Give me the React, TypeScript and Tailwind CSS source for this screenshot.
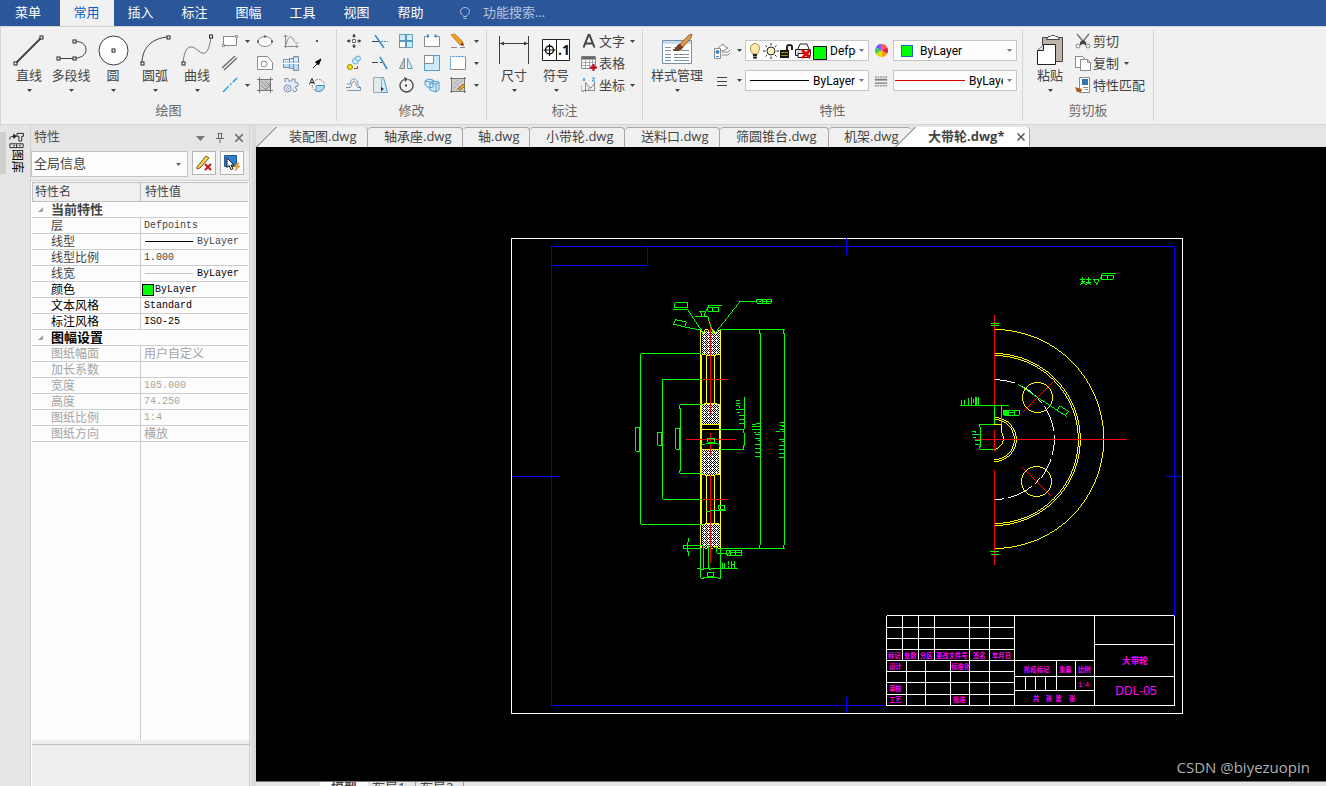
import { useState, type ReactNode } from 'react'
import clsx from 'clsx'

const MENUS = ['常用', '插入', '标注', '图幅', '工具', '视图', '帮助']

const DOC_TABS = [
  { name: '装配图.dwg', width: 'w-[112px] pl-[33px]' },
  { name: '轴承座.dwg', width: 'w-[95px] pl-[16px]' },
  { name: '轴.dwg', width: 'w-[67px] pl-[15px]' },
  { name: '小带轮.dwg', width: 'w-[95px] pl-[16px]' },
  { name: '送料口.dwg', width: 'w-[95px] pl-[16px]' },
  { name: '筛圆锥台.dwg', width: 'w-[109px] pl-[16px]' },
  { name: '机架.dwg', width: 'w-[82px] pl-[15px]' },
]

type Row = { name: string; value?: ReactNode; tone?: string; group?: boolean }

const ROWS: Row[] = [
  { name: '当前特性', group: true, tone: 'text-[#444]' },
  { name: '层', value: 'Defpoints', tone: 'text-[#444]' },
  { name: '线型', value: <LineValue color="bg-black" />, tone: 'text-[#444]' },
  { name: '线型比例', value: '1.000', tone: 'text-[#444]' },
  { name: '线宽', value: <LineValue color="bg-[#c4c4c4]" dark />, tone: 'text-[#444]' },
  { name: '颜色', value: <ColorValue />, tone: 'text-black' },
  { name: '文本风格', value: 'Standard', tone: 'text-black' },
  { name: '标注风格', value: 'ISO-25', tone: 'text-black' },
  { name: '图幅设置', group: true, tone: 'text-black' },
  { name: '图纸幅面', value: '用户自定义' },
  { name: '加长系数', value: '' },
  { name: '宽度', value: '105.000' },
  { name: '高度', value: '74.250' },
  { name: '图纸比例', value: '1:4' },
  { name: '图纸方向', value: '横放' },
]

function LineValue({ color, dark }: { color: string; dark?: boolean }) {
  return (
    <span className={clsx('flex items-center gap-1', dark && 'text-black')}>
      <span className={clsx('h-px w-12 ml-px', color)} />
      ByLayer
    </span>
  )
}

function ColorValue() {
  return (
    <span className="flex items-center gap-px -ml-0.5">
      <span className="size-3 border border-black bg-[#00ff00]" />
      ByLayer
    </span>
  )
}

function Arrow({ className = 'text-[#444]' }: { className?: string }) {
  return (
    <svg viewBox="0 0 5 3" className={clsx('w-[5px] h-[3px] shrink-0', className)} fill="currentColor">
      <path d="M0 0h5L2.5 3z" />
    </svg>
  )
}

function Icon({ children, className = 'size-4' }: { children: ReactNode; className?: string }) {
  return (
    <svg viewBox="0 0 16 16" fill="none" stroke="#8a8a8a" className={clsx('shrink-0', className)}>
      {children}
    </svg>
  )
}

function Group({ label, className, pad, children }: { label: string; className: string; pad: string; children: ReactNode }) {
  return (
    <section className={clsx('flex flex-col justify-between shrink-0 my-[3px] border-r border-[#d4d4d4]', className)}>
      <div className={clsx('flex h-[72px]', pad)}>{children}</div>
      <h2 className="text-center leading-[18px] pb-0.5 text-[#6a6a6a]">{label}</h2>
    </section>
  )
}

function BigButton({ label, className = 'w-[42px]', children }: { label: string; className?: string; children: ReactNode }) {
  return (
    <button className={clsx('flex flex-col items-center pt-1 whitespace-nowrap', className)}>
      <svg viewBox="0 0 32 32" className="size-8 shrink-0" fill="none" stroke="#3c3c46">{children}</svg>
      <span className="leading-[18px]">{label}</span>
      <Arrow className="mt-[5px] text-[#444]" />
    </button>
  )
}

function Cell({ label, children }: { label: string; children: ReactNode }) {
  return (
    <button aria-label={label} className="flex h-[22px] items-center justify-center">
      {children}
    </button>
  )
}

function Knob({ x, y }: { x: number; y: number }) {
  return <rect x={x - 1.5} y={y - 1.5} width="3" height="3" fill="#fff" stroke="#222" />
}

function DrawGroup() {
  return (
    <Group label="绘图" className="w-[336px]" pad="pl-[7px]">
      <BigButton label="直线">
        <path d="M3 29L29 3" strokeWidth="1.8" />
        <Knob x={2.5} y={29.5} /><Knob x={28.5} y={3.5} />
      </BigButton>
      <BigButton label="多段线">
        <path d="M3 24.5H19C26 24 31 21 31 15.500C31 10 26 7 19 7.500" />
        <Knob x={3.5} y={24.5} /><Knob x={19.5} y={24.5} /><Knob x={19.5} y={7.5} />
      </BigButton>
      <BigButton label="圆">
        <circle cx="16.5" cy="16.5" r="14.5" fill="#fff" />
        <Knob x={16.5} y={16.5} />
      </BigButton>
      <BigButton label="圆弧">
        <path d="M3 29C3 14 13 4 29 3" />
        <Knob x={3.5} y={29.5} /><Knob x={29.5} y={3.5} />
      </BigButton>
      <BigButton label="曲线">
        <path d="M2 29C3 18 6 12 11 13S20 21 24 19S29 9 30 3" stroke="#777" />
        <Knob x={2.5} y={29.5} /><Knob x={30} y={2.5} />
      </BigButton>
      <div className="grid grid-cols-[24px_10px_26px_26px_26px] auto-rows-[22px]">
        <Cell label="矩形"><Icon><path d="M1.500 3.500h13v9h-13z" fill="#fff" /><path d="M.5 11.500h2v2h-2zM13.500 2.500h2v2h-2z" fill="#fff" /></Icon></Cell>
        <Cell label="矩形选项"><Arrow /></Cell>
        <Cell label="椭圆"><Icon><ellipse cx="8" cy="8.500" rx="7" ry="5" fill="#fff" /><path d="M7 3.500h2M1 7.500v2M15 7.500v2" stroke="#555" strokeWidth="2" /></Icon></Cell>
        <Cell label="公式曲线"><Icon><path d="M2.500 2v13M1 13.500h14M.5 4l2-2 2 2M13 11.500l2 2-2 2M3 12C5 3 8 2 10 6s3 4 5 4" /></Icon></Cell>
        <Cell label="点"><Icon><path d="M7 7h2v2H7z" fill="#555" stroke="none" /></Icon></Cell>

        <Cell label="平行线"><Icon><path d="M0 13L13 1M2 15L15 3" stroke="#6a6a6a" strokeWidth="1.3" /></Icon></Cell>
        <span />
        <Cell label="局部放大"><Icon><path d="M.500 1.500h10l5 6v7H.500z" fill="#fff" /><circle cx="7" cy="9" r="3" /></Icon></Cell>
        <Cell label="轴"><Icon><path d="M.500 4.500h6v8h-6zM6.500 3.500h4v10h-4zM10.500 1.500h5v14h-5z" fill="#b9dcf6" stroke="#7c8da3" /><path d="M1 5.500h5M7 5.500h3M11 4.500h4M0 8.500h16" stroke="#fff" /></Icon></Cell>
        <Cell label="箭头"><Icon><path d="M4 13l5-5" stroke="#111" /><path d="M12 4L6.500 7l3 3z" fill="#111" stroke="#111" /></Icon></Cell>

        <Cell label="构造线"><Icon><path d="M1 15L15 1" stroke="#2ba3dc" strokeWidth="1.5" strokeDasharray="8 2 2 2" /></Icon></Cell>
        <Cell label="构造线选项"><Arrow /></Cell>
        <Cell label="填充"><Icon><path d="M2 2h12v12H2z" fill="#c4c8c8" stroke="none" /><path d="M2.500 0v16M13.500 0v16M0 2.500h16M0 13.500h16M8 13c3-2 5-4 5-7" stroke="#777" /><path d="M4 4l7 7M4 8l4 4M8 4l4 4" stroke="#999" /></Icon></Cell>
        <Cell label="齿轮"><Icon><path d="M2 5V1.500h3l1 3 3-1V2h3v3l3 1v3l-3 1 2 3-2 2-3-2" fill="#dfe9f7" stroke="#7f8ca3" /><circle cx="4.500" cy="11.500" r="3.500" fill="#dfe9f7" stroke="#7f8ca3" /><circle cx="4.500" cy="11.500" r="1" fill="#fff" stroke="#7f8ca3" /></Icon></Cell>
        <Cell label="块"><Icon><circle cx="9.500" cy="8.500" r="6" fill="#fff" strokeDasharray="3 1" /><path d="M7 8.500h8.500A6 6 0 0 1 7 14z" fill="#aadcf8" stroke="#5a8cb0" /><path d="M.5 7.500L3 1.500 5.500 7.500M1.500 5.500h3" stroke="#222" /></Icon></Cell>
      </div>
    </Group>
  )
}

function ModifyGroup() {
  const blue = '#2f8fd0'
  return (
    <Group label="修改" className="w-[150px]" pad="pl-1">
      <div className="grid grid-cols-[26px_26px_26px_26px_26px_10px] auto-rows-[22px]">
        <Cell label="移动"><Icon><path d="M6.500 6.500h3v3h-3z" fill="#fff" stroke="#666" /><path d="M8 1v4M8 11v4M1 8h4M11 8h4" stroke="#555" /><path d="M8 1l2 2.500H6zM8 15l2-2.500H6zM1 8l2.500-2v4zM15 8l-2.500-2v4z" fill="#333" stroke="none" /></Icon></Cell>
        <Cell label="裁剪"><Icon><path d="M0 8.500h7" stroke="#444" /><path d="M3 2l9 13" stroke={blue} strokeWidth="1.5" /><path d="M9 8.500h7" stroke={blue} strokeDasharray="2 1" /></Icon></Cell>
        <Cell label="阵列"><Icon><path d="M1.500 1.500h13v13h-13z" fill="#ccecfc" stroke="#6aa0c0" /><path d="M1.500 8.500h6v6h-6z" fill="#fff" stroke="none" /><path d="M8 1v14M1 8h14" stroke="#5a98c0" strokeWidth="2" /><path d="M1.500 9v5.500H7" /></Icon></Cell>
        <Cell label="打断"><Icon><path d="M4 3.500H.500v10h15v-10H12" fill="#fff" /><path d="M4 1.500v3M11.500 1.500v3" stroke={blue} strokeWidth="2" /></Icon></Cell>
        <Cell label="删除"><Icon><path d="M1 2l4-1 8 8-3 3z" fill="#f2a127" stroke="#c88430" /><path d="M10 12l3-3 1 4z" fill="#7a3d1c" stroke="none" /><path d="M1 14.500h6M10 14.500h5" /></Icon></Cell>
        <Cell label="删除选项"><Arrow /></Cell>

        <Cell label="复制"><Icon><circle cx="4" cy="12" r="2.500" fill="#ffe600" stroke="#9a8400" /><circle cx="9.500" cy="6" r="3" fill="#d2edfc" stroke="#6aaad8" /><circle cx="12" cy="3.500" r="2.500" fill="#d2edfc" stroke="#6aaad8" /><path d="M8 13.500h3.500V11" stroke="#b33" /></Icon></Cell>
        <Cell label="延伸"><Icon><path d="M0 7.500h6M8 7.500h2" stroke="#444" /><path d="M8 2l7 12" stroke={blue} strokeWidth="1.5" /></Icon></Cell>
        <Cell label="镜像"><Icon><path d="M6.500 3v10.500h-5z" fill="#ccc" /><path d="M9.500 3v10.500h5z" fill="#ccecfc" stroke="#6aa0c0" /></Icon></Cell>
        <Cell label="缩放"><Icon><path d="M.500.500h15v15H.500z" fill="#ccecfc" stroke="#5a98c8" /><path d="M.500.500h9v8h-9z" fill="#fff" /></Icon></Cell>
        <Cell label="分解"><Icon><path d="M.500 1.500h15v13H.500z" fill="#fff" stroke="none" /><path d="M.500 14.500v-13h15" stroke={blue} strokeDasharray="2 1" /><path d="M15.500 2v12.500H1" /></Icon></Cell>
        <Cell label="分解选项"><Arrow /></Cell>

        <Cell label="等距线"><Icon><path d="M0 10.500h4c2 0 1-6 4-6s2 6 4 6h3" /><path d="M1 13.500h13.500q1-4-2-4.500c-1-1 0-7-4.500-7-3 0-3.500 2-3.500 5H1" stroke="#6d9fc5" /></Icon></Cell>
        <Cell label="拉伸"><Icon><path d="M7.500.500h4l4 15h-8" fill="#ccecfc" stroke="#5a98c8" /><path d="M1.500.500h8v15h-8z" fill="#e3eaea" stroke="#a0a8a8" /><path d="M9 10l3 2-3 2z" fill="#333" stroke="none" /></Icon></Cell>
        <Cell label="旋转"><Icon><path d="M6 2.500A6.500 6.500 0 1 0 10.500 2.300" stroke="#444" strokeWidth="1.3" /><path d="M6 0l4 2-3 3z" fill="#444" stroke="none" /><path d="M7 7.500h2v2H7z" fill="#444" stroke="none" /></Icon></Cell>
        <Cell label="三维"><Icon><path d="M1 4l3-2 5 1v7l-4 1-4-3zM6 6l3-2 6 1v8l-3 2-6-2z" fill="#ccecfc" stroke="#5a98c8" /><path d="M6 6l6 1v8M12 7l3-2M1 4l5 1" stroke="#5a98c8" /></Icon></Cell>
        <Cell label="填充编辑"><Icon><path d="M1.500 1.500h13v13h-13z" fill="#cdcdcd" stroke="#777" /><path d="M0 1.500h16M1.500 0v16M0 14.500h16M14.500 0v16" stroke="#777" /><path d="M3 8l5-5M3 12l9-9M6 13l4-4" stroke="#aaa" /><path d="M8 12l5-5 2 2-5 4z" fill="#eba335" stroke="#a06a20" /></Icon></Cell>
        <Cell label="填充编辑选项"><Arrow /></Cell>
      </div>
    </Group>
  )
}

function TextButton({ label, arrow, children }: { label: string; arrow?: boolean; children: ReactNode }) {
  return (
    <button className="flex h-[22px] items-center gap-0.5 whitespace-nowrap">
      {children}
      <span>{label}</span>
      {arrow && <Arrow className="ml-[3px] text-[#444]" />}
    </button>
  )
}

function AnnotateGroup() {
  return (
    <Group label="标注" className="w-[156px]" pad="pl-1.5">
      <BigButton label="尺寸">
        <path d="M1.500 2v28M30.500 2v28M2 9.500h28" />
        <path d="M2 9.500l4-2v4zM30 9.500l-4-2v4z" fill="#3c3c46" stroke="none" />
      </BigButton>
      <BigButton label="符号">
        <path d="M2.500 5.500h27v21h-27zM16.500 5.500v21" fill="#fff" stroke="#222" />
        <circle cx="9.500" cy="16" r="4" stroke="#111" strokeWidth="1.500" />
        <path d="M9.500 10v12M3.500 16h12" stroke="#111" />
        <text x="18" y="21" fontSize="14" fontWeight="bold" fill="#111" stroke="none">.1</text>
      </BigButton>
      <div className="flex flex-col pl-1">
        <TextButton label="文字" arrow>
          <Icon><path d="M2.500 14.500L7.500 2h1l5 12.500M4.500 10.500h7" stroke="#444" strokeWidth="2" /></Icon>
        </TextButton>
        <TextButton label="表格">
          <Icon><path d="M.500 1.500h14v12H.500z" fill="#fff" /><path d="M1 3h13" stroke="#666" strokeWidth="3" /><path d="M.500 7.500h14M.500 10.500h14M4.500 4v9M8.500 4v9M11.500 4v9" stroke="#aaa" /><path d="M12.500 9v7M9 12.500h7" stroke="#c00010" strokeWidth="2" /></Icon>
        </TextButton>
        <TextButton label="坐标" arrow>
          <Icon><path d="M4.500 5v10M2 13.500h12M13.500 5v9M5 6l3 4 2 1 3-4M8 14v-3" /><path d="M2 1l2 3M4 1L2 4M11 1h3l-3 3h3M0 8v5M0 14h3" stroke="#3a9ad8" /></Icon>
        </TextButton>
      </div>
    </Group>
  )
}

function Combo({ label, value, gap = 'gap-1', before }: { label: string; value: string; gap?: string; before: ReactNode }) {
  return (
    <div className={clsx("flex h-[21px] w-[124px] items-center border border-[#c6c6c6] bg-[#fdfdfd] pl-px pr-1 font-['Roboto',sans-serif] text-xs text-black", gap)}>
      {before}
      <select aria-label={label} className="appearance-none min-w-0 flex-1 overflow-hidden bg-transparent leading-4 outline-none">
        <option>{value}</option>
      </select>
      <Arrow className="text-[#777]" />
    </div>
  )
}

function LayerIcons() {
  return (
    <svg viewBox="0 0 80 18" className="w-[80px] h-[18px] shrink-0" fill="none" stroke="#222">
      <path d="M5.500 12C5 10 3.500 9 3.500 6a4.500 4.500 0 0 1 9 0c0 3-1.500 4-2 6z" fill="#ffe9a8" stroke="#b08a40" />
      <path d="M6 13h4M6 15.500h4" strokeWidth="2" />
      <circle cx="24" cy="9" r="4" fill="#fff6c8" />
      <path d="M24 1v2.500M24 14.500V17M16 9h2.500M29.500 9H32M18.500 3.500l1.500 1.500M28 13l1.500 1.500M29.500 3.500L28 5M20 13l-1.500 1.500" />
      <path d="M40 9V5q0-2 2.500-2T45 5v3" strokeWidth="2" />
      <path d="M33 8h9v8h-9z" fill="#1a1a08" stroke="none" />
      <path d="M34 10.500h7M34 13.500h7" stroke="#998b20" />
      <path d="M51 7l2-5h7l2 5" fill="#fff" />
      <path d="M48.500 7.500h15v6h-15z" fill="#ddd" />
      <path d="M51 11.500h10v4H51z" fill="#fff" />
      <path d="M55 8l8 8M63 8l-8 8" stroke="#e00" strokeWidth="2.500" />
      <path d="M66.500 4.500h13v13h-13z" fill="#0f0" stroke="#000" />
    </svg>
  )
}

function PropsGroup() {
  return (
    <Group label="特性" className="w-[380px]" pad="pl-1">
      <BigButton label="样式管理" className="w-[60px]">
        <path d="M1.500 6.500h29v23h-29z" fill="#fff" stroke="#7890aa" />
        <path d="M2 7h28v3H2z" fill="#c8dcf0" stroke="none" />
        <path d="M4 13.500h6M4 16.500h6M4 20.500h6M4 23.500h6M4 26.500h6M13 13.500h5M13 20.500h15M13 23.500h15M13 26.500h15M20 16.500h8" stroke="#8090a8" />
        <path d="M12 16c4 0 3-5 7-6l3 3c-2 4-6 4-10 3z" fill="#7a4520" stroke="#5b3013" />
        <path d="M19 10L28 1l3-1-1 4-8 9z" fill="#e09a50" stroke="#a56427" />
      </BigButton>
      <div className="flex flex-col gap-[9px] pt-2.5 pl-[7px]">
        <div className="flex h-[21px] items-center">
          <button aria-label="图层" className="w-4"><Icon><path d="M5 4l4-3 1 2 4 2-5 3-4-1zM8 9h6l2-2M8 12h6l2-2" fill="#fff" /><path d="M.500 5.500h6v10h-6z" fill="#fff" /><circle cx="3.500" cy="9" r="2" fill="#3a80c0" stroke="none" /><path d="M2 13.500h3" stroke="#3a80c0" /></Icon></button>
          <button aria-label="图层选项" className="flex w-[15px] justify-center pl-1"><Arrow /></button>
          <Combo label="图层" value="Defpoints" gap="gap-[3px]" before={<LayerIcons />} />
          <button aria-label="颜色" className="flex w-6 justify-center">
            <svg viewBox="0 0 16 16" className="size-[15px]">
              <path d="M8 8L8 1A7 7 0 0 1 14 4.500z" fill="#ff5a4a" />
              <path d="M8 8L14 4.500A7 7 0 0 1 14 11.500z" fill="#e02050" />
              <path d="M8 8L14 11.500A7 7 0 0 1 8 15z" fill="#ff9a10" />
              <path d="M8 8V15A7 7 0 0 1 2 11.500z" fill="#d8e000" />
              <path d="M8 8L2 11.500A7 7 0 0 1 2 4.500z" fill="#3ccc5c" />
              <path d="M8 8L2 4.500A7 7 0 0 1 8 1z" fill="#7a50ff" />
            </svg>
          </button>
          <Combo label="颜色" value="ByLayer" gap="gap-[7px]" before={<span className="ml-1.5 size-3 border border-[#1a6fc0] bg-[#00ff00]" />} />
        </div>
        <div className="flex h-[21px] items-center">
          <button aria-label="线宽" className="w-4"><Icon><path d="M3 4.500h10M3 8.500h10M3 12.500h10" stroke="#444" /></Icon></button>
          <button aria-label="线宽选项" className="flex w-[15px] justify-center pl-1"><Arrow /></button>
          <Combo label="线型" value="ByLayer" before={<span className="ml-[3px] h-px w-[59px] shrink-0 bg-black" />} />
          <button aria-label="线型管理" className="flex w-6 justify-center">
            <Icon className="size-[14px]"><path d="M1 3.500h14M1 13.500h14" stroke="#555" strokeDasharray="2 1" /><path d="M1 6.500h14" stroke="#777" strokeWidth="2" /><path d="M1 10.500h14" stroke="#999" strokeWidth="2" /></Icon>
          </button>
          <Combo label="线宽" value="ByLayer" before={<span className="h-px w-[70px] shrink-0 bg-[#d00000]" />} />
        </div>
      </div>
    </Group>
  )
}

function ClipboardGroup() {
  return (
    <Group label="剪切板" className="w-[131px]" pad="pl-1.5">
      <BigButton label="粘贴">
        <path d="M8.500 3.500h20v24h-20z" fill="#c0b4a8" stroke="#444" />
        <path d="M12.500 5.500h13l-2-3h-2l-1-1h-3l-1 1h-2z" fill="#fff" stroke="#444" />
        <path d="M9.500 10.500h12v20h-18v-14z" fill="#fff" stroke="#222" />
        <path d="M9.500 10.500v6h-6" fill="#ddd" stroke="#222" />
      </BigButton>
      <div className="flex flex-col items-start pl-1">
        <TextButton label="剪切">
          <Icon><path d="M2 1l9 11M14 1L5 12" stroke="#777" strokeWidth="1.500" /><circle cx="3" cy="13" r="2" /><circle cx="13" cy="13" r="2" /><path d="M5 9l3-2 3 2v3l-3-1-3 1z" fill="#444" stroke="none" /></Icon>
        </TextButton>
        <TextButton label="复制" arrow>
          <Icon><path d="M.500 1.500h7l3 3v8H.500z" fill="#fff" /><path d="M5.500 4.500h7l3 3v8h-10z" fill="#fff" /><path d="M12.500 4.500v3h3" /></Icon>
        </TextButton>
        <TextButton label="特性匹配">
          <Icon><path d="M4.500.500h10v15h-10z" fill="#fff" /><path d="M7 2h6v6H7z" fill="#3272b0" stroke="none" /><path d="M8 10.500h5M10 12.500h3" /><path d="M0 10l3 1 4 1-1 3H2z" fill="#b05a18" stroke="none" /></Icon>
        </TextButton>
      </div>
    </Group>
  )
}

function PropertyPanel() {
  return (
    <aside className="flex w-[220px] shrink-0 flex-col border-x border-[#d0d0d0] bg-[#eeeeee]">
      <header className="flex h-[26px] items-center bg-[#e5e5e5] pl-[3px] text-[#555]">
        <h2 className="flex-1 pb-1">特性</h2>
        <button aria-label="菜单" className="px-1.5"><svg viewBox="0 0 9 5" className="w-[9px] h-[5px]" fill="#777"><path d="M0 0h9L4.500 5z" /></svg></button>
        <button aria-label="固定" className="px-[5px]"><svg viewBox="0 0 8 10" className="w-2 h-2.5" fill="none" stroke="#666"><path d="M2.500 0v5.500M1.500.500h5M5.500 0v5.500M0 5.500h8M4 6v4" /></svg></button>
        <button aria-label="关闭" className="px-1.5"><svg viewBox="0 0 8 8" className="size-2" stroke="#666" strokeWidth="1.500"><path d="M0 0l8 8M8 0L0 8" /></svg></button>
      </header>
      <div className="flex h-[29px] items-start gap-1">
        <div className="flex h-[26px] flex-1 items-center border border-[#c4c4c4] bg-[#fdfdfd] pl-0.5 pr-1.5">
          <select aria-label="对象" className="appearance-none flex-1 bg-transparent pb-0.5 outline-none text-[#444]">
            <option>全局信息</option>
          </select>
          <Arrow className="text-[#666]" />
        </div>
        <button aria-label="清除" className="flex size-6 items-center justify-center border border-[#b4b4b4] bg-[#fbfbfb]">
          <Icon><path d="M1 12L10 1l3 2L4 13l-3 1z" fill="#f6cf54" stroke="#7a5a18" /><path d="M9 9l6 6M15 9l-6 6" stroke="#c81818" strokeWidth="2" /></Icon>
        </button>
        <button aria-label="快速选择" className="mr-[5px] flex size-6 items-center justify-center border border-[#b4b4b4] bg-[#fbfbfb]">
          <Icon><path d="M.500.500h12v11H.500z" fill="#2f7fd0" stroke="#23568c" /><path d="M3 3l7 7H7l2 4-2 .500-2-4-2 2z" fill="#fff" stroke="#222" /><path d="M13 8l-3 4h3l-2 4 5-5h-3l2-3z" fill="#ffa51e" stroke="#c27010" strokeWidth=".5" /></Icon>
        </button>
      </div>
      <div className="flex flex-1 flex-col border-t border-[#d0d0d0] bg-[#fdfdfd] pt-px pl-px pr-px">
        <table className="w-full table-fixed border-separate border-spacing-0 text-left text-xs leading-[15px]">
          <thead>
            <tr className="text-[#444]">
              <th className="h-5 w-[109px] border border-[#c0c0c0] bg-[#f0f0f0] pl-0.5 leading-[18px] font-normal">特性名</th>
              <th className="border-y border-[#c0c0c0] bg-[#f0f0f0] pl-1 leading-[18px] font-normal">特性值</th>
            </tr>
          </thead>
          <tbody>
            {ROWS.map((row) => (
              <tr key={row.name} className={row.tone ?? 'text-[#a4a4a4]'}>
                {row.group ? (
                  <th colSpan={2} className="h-4 border-b border-[#cccccc] text-[13px]">
                    <span className="flex h-[15px] items-center gap-2 pl-1.5">
                      <svg viewBox="0 0 5 5" className="size-[5px]" fill="#a0a0a0"><path d="M5 0v5H0z" /></svg>
                      {row.name}
                    </span>
                  </th>
                ) : (
                  <>
                    <td className="h-4 border-r border-b border-[#cccccc] pl-[19px]">
                      <div className="h-[15px]">{row.name}</div>
                    </td>
                    <td className="h-4 border-b border-[#cccccc] pl-[3px]">
                      <div className={clsx('h-[15px]', row.value === '用户自定义' || row.value === '横放' ? 'text-xs leading-[15px]' : "font-['Liberation_Mono',monospace] text-[10px] leading-[15px]")}>
                        {row.value}
                      </div>
                    </td>
                  </>
                )}
              </tr>
            ))}
          </tbody>
        </table>
        <div className="w-[109px] flex-1 border-r border-[#cccccc]" />
      </div>
      <div className="h-[46px] border-l border-white pt-1">
        <hr className="border-[#c0c0c0]" />
      </div>
    </aside>
  )
}

// Section of the wheel, units are thirds of a screen pixel
function SectionView() {
  return (
    <g transform="translate(630 290) scale(.3333333)" strokeWidth="3" fill="none">
      <g fill="url(#hatch)" stroke="none">
        <path d="M215 124h54v70h-54zM216 342h52v60h-52zM216 480h52v74h-52zM215 702h54v70h-54z" />
      </g>
      <g stroke="#ffff00">
        <path d="M211.500 120V775M214.500 195V705M271.500 120V775M268.500 342V555" />
        <path d="M229.500 197V340M253.500 197V340M229.500 556V700M253.500 556V700" />
        <path d="M215 193.500h12v3h30v-3h12M216 343.500h6v-3h40v3h6M214 403.500h56M214 418.500h56M214 478.500h56M216 552.500h9v3h30v-3h12M215 703.500h10v-3h40v3h4" />
        <path d="M211 120.500l8 10 6-11h8l6 10 4-10h6l6 11 8-10h8M211 775l7-8 6 8h8l6-8 6 8h6l7-8 8 8h6" />
      </g>
      <g stroke="#ff0000">
        <path d="M241.500 100V372M241.500 430V495M241.500 556V820M168 448.500H318M212 268.500H294M212 628.500H294" />
      </g>
      <g stroke="#00ff00">
        <path d="M214 190.500H31.500V703.500H214M16.500 412h12v72h-12z" />
        <path d="M214 268.500H97.500V628.500H214M82.500 427h13v39h-13z" />
        <path d="M214 343.500H148.500v12h3V541.500h-3v9H214M136.500 415h12v63h-12z" />
        <path d="M271 118.500H465M388.500 118v12h3V766.500h-3v9M460.500 118v12h3V766.500h-3v9M271 775.500H465" />
        <path d="M343.500 321V418M271 418.500H340.500v12h3V466h-3v12.500H271" />
        <path d="M318 331.500h12M318 340.500h12M318 346.500h10v6M318 358.500h25M321 367.500h9M327 376.500h16M327 388.500h16M327 400.500h16" />
        <path d="M366 403.500h12M378 400.500h12M366 409.500h24M366 418.500h25M372 427.500h6M384 427.500h7M375 433.500h16M375 445.500h16M384 451.500h6M375 463.500h16M375 475.500h16M375 487.500h16M375 499.500h16" />
        <path d="M450 397.500h13M450 406.500h13M456 409.500h7M450 418.500h13M438 424.500h12M456 424.500h7M447 448.500h16M456 454.500h7M447 466.500h16M447 478.500h16M447 490.500h16M447 502.500h16" />
        <path d="M133.500 37.500h39v15h-39zM129 58.500h45L222 130" />
        <path d="M138 88l6 3 25 4-5 16-34-9zM130 102l30 8 35 7 20 2" />
        <path d="M208 64.500h18l8-18H276M232.500 52h34v12h-34zM248.500 52v12M212 67l4 11h6l4-12M196 79.500h38l8 24 8 26" />
        <path d="M252 130L328 34.500H380M379.500 28h45v12h-45zM388 36l8-6M396.500 30v10M400 33h22M410 30v8" />
        <path d="M214 472v-9h12l3-3h30l6 3h4v9M232.500 445h21v12h-21z" />
        <path d="M228 663.500h12v-3h48M265.500 646h18v12h-18z" />
        <path d="M160.500 766.500h60M160.500 775.500h51M160.500 766v10M175.500 743v12h-3v30h3v12M220.500 766v70M235.500 766v70M259.500 772v18h30" />
        <path d="M289.500 781h45v15h-45zM292 794l8-10M302.500 782v14M303 788.500h30M316.500 784v10" />
        <path d="M201 835.500h10v3h12v-3h14v3h6v-3H324M277.500 820v15M283.500 820v15M295.500 812v12M295.500 828v7M304.500 812v23M313.500 812v23M307 823h8" />
        <path d="M211.500 775V865.500h9v-3h42v3h9V775M232.500 847h18v13h-18z" />
      </g>
    </g>
  )
}

// Half front elevation, units are thirds of a screen pixel
function FrontView() {
  return (
    <g transform="translate(940 260) scale(.3333333)" strokeWidth="3" fill="none">
      <g stroke="#ffff00">
        <path d="M163 208.500A328.500 328.500 0 0 1 163 865.500" />
        <path d="M163 280.500A257 257 0 0 1 163 796.500M163 286.500A251 251 0 0 1 163 790.500" />
        <circle cx="292.500" cy="412.500" r="45.500" />
        <circle cx="289.500" cy="664.500" r="45.500" />
        <path d="M163 472.500A66 66 0 0 1 163 604.500M163 478.500A60 60 0 0 1 163 598.500" />
        <path d="M163 493.500h21.500v24A33 33 0 0 1 163 568.500" />
      </g>
      <path d="M163 358.500A180 180 0 0 1 163 718.500" stroke="#fff" strokeDasharray="62 12 90 12 80 12" />
      <g stroke="#ff0000">
        <path d="M163.500 165V490M163.500 510V572M163.500 629V915M105 538.500H561M250 455L338 367M247 622L334 709" />
      </g>
      <g stroke="#00ff00">
        <path d="M153 190.500h24M153 196.500h24M150 874.500h27M153 883.500h24" />
        <path d="M60 436.500H207M163.500 436V493M184.500 436V493M64.500 420v15M73.500 420v15M85.500 414v21M94.500 411v24M100.500 416v12M106.500 411v24M109.500 411v24M115.500 411v24" />
        <path d="M163 493.500H118.500v9h3v57h-3v9H163M96 514.500h10v5M96 523.500h24M99 532.500h9M105 541.500h15M105 553.500h15" />
        <path d="M190.500 451h48v15h-48zM205.500 451v15M208 458h14M223.500 451v15" />
        <path d="M192 453h12v12h-12z" fill="#00ff00" stroke="none" />
        <path d="M235 373L292 412L335 440L380 469M352 451l8-14 25 17-9 13" />
        <path d="M421 58h14M428.500 50v22M424 65h12M420 74l8-8 8 8M438 60h15M446.500 50v23M439 67h14M439 74l7-8 7 8" />
        <path d="M460 58.500h18l8-18H527M462 59l8 15 8-15M484.500 46h36v12h-36zM502.500 46v12" />
      </g>
    </g>
  )
}

const BLOCK_TEXT: [number, number, string][] = [
  [24, 158, '标记'], [72, 158, '处数'], [120, 158, '分区'], [168, 158, '更改文件号'], [279, 158, '签名'], [336, 158, '年月日'],
  [27, 191, '设计'], [213, 191, '标准化'], [27, 258, '审核'], [27, 292, '工艺'], [219, 292, '批准'],
  [432, 202, '阶段标记'], [537, 202, '重量'], [594, 202, '比例'], [459, 289, '共'], [497, 289, '张'], [526, 289, '第'], [567, 289, '张'],
]

function TitleBlock() {
  return (
    <g transform="translate(880 605) scale(.3333333)">
      <g stroke="#fff" strokeWidth="3" fill="none">
        <path d="M19.500 31.500H883.500V301.500H19.500zM403.500 31V301M643.500 31V301" />
        <path d="M19 67.500H403M19 100.500H403M19 133.500H403M19 166.500H643M19 199.500H403M19 232.500H403M19 268.500H403" />
        <path d="M67.500 31V166M115.500 31V166M163.500 31V166M268.500 31V301M328.500 31V301M79.500 166V301M136.500 166V301M211.500 166V301" />
        <path d="M403 214.500H643M403 256.500H643M643 214.500H883M643 118.500H883M529.500 166V256M586.500 166V256M436.500 214V256M466.500 214V256M496.500 214V256" />
      </g>
      <g fill="#ff00ff" className="font-['Noto_Sans_CJK_SC',sans-serif]" fontSize="19" fontWeight="bold">
        {BLOCK_TEXT.map(([x, y, text]) => (
          <text key={`${x}-${y}`} x={x} y={y}>{text}</text>
        ))}
        <text x="594" y="245" fontSize="24" fontWeight="normal" className="font-['Liberation_Sans',sans-serif]">1:4</text>
        <text x="726" y="178" fontSize="26">大带轮</text>
        <text x="706" y="270" fontSize="36" fontWeight="normal" className="font-['Liberation_Sans',sans-serif]">DDL-05</text>
      </g>
    </g>
  )
}

function Drawing() {
  return (
    <svg viewBox="256 147 1070 634" className="block size-full" shapeRendering="crispEdges" role="img" aria-label="大带轮">
      <defs>
        <pattern id="hatch" width="12" height="12" patternUnits="userSpaceOnUse">
          <rect width="12" height="12" fill="#000" />
          <path d="M0 9h3v3H0zM3 6h3v3H3zM6 3h3v3H6zM9 0h3v3H9zM0 3h3v3H0zM3 0h3v3H3zM6 9h3v3H6zM9 6h3v3H9zM6 6h3v3H6z" fill="#fff" />
        </pattern>
      </defs>
      <path d="M511.500 238.500H1182.500V713.500H511.500z" fill="none" stroke="#fff" />
      <path
        d="M551.500 246.500H1174.500V705.500H551.500zM551.500 265.500H647.500V246.500M846.500 238V255M846.500 697V713M512 476.500H560M1166 476.500H1182"
        fill="none"
        stroke="#0000ff"
      />
      <SectionView />
      <FrontView />
      <TitleBlock />
    </svg>
  )
}

export default function App() {
  const [menu, setMenu] = useState('常用')

  return (
    <div className="flex h-screen flex-col overflow-hidden bg-[#e5e5e5] font-['Open_Sans','Noto_Sans_CJK_SC',sans-serif] text-[13px] leading-[18px] text-[#444]">
      <nav className="flex h-[26px] shrink-0 bg-[#2b579a] text-white">
        <button className="w-[60px] pr-1 pb-0.5">菜单</button>
        {MENUS.map((name) => (
          <button
            key={name}
            onClick={() => setMenu(name)}
            className={clsx('w-[54px] pb-0.5 pr-px', menu === name && 'bg-[#f1f1f1] text-[#0a62c8]')}
          >
            {name}
          </button>
        ))}
        <label className="flex items-center gap-[13px] pl-[22px] text-[#b4c4de]">
          <svg viewBox="0 0 10 13" className="w-2.5 h-[13px]" fill="none" stroke="currentColor">
            <path d="M3.500 9.500C3 8 .500 7 .500 4.500a4.500 4 0 0 1 9 0C9.500 7 7 8 6.500 9.500zM3.500 11.500h3" />
          </svg>
          <input placeholder="功能搜索..." className="w-40 bg-transparent pb-0.5 outline-none placeholder:text-[#b4c4de]" />
        </label>
      </nav>

      <div className="flex h-[99px] shrink-0 border border-[#d4d4d4] border-r-0 bg-[#f1f1f1]">
        <DrawGroup />
        <ModifyGroup />
        <AnnotateGroup />
        <PropsGroup />
        <ClipboardGroup />
      </div>

      <div className="flex min-h-0 flex-1">
        <div className="w-[30px] shrink-0 pt-[7px]">
          <div className="flex items-start gap-[3px]">
            <div className="h-[42px] w-1.5 bg-[#cfcfcf]" />
            <button className="flex flex-col items-center text-black">
              <svg viewBox="0 0 15 18" className="w-[15px] h-[17px]" fill="none" stroke="#222">
                <path d="M.5 8V6Q1 4.500 5 4.500M8 1.500h7v3h-2v5h-3v-5H8zM.5 12.500h14v4H.5z" />
                <path d="M4 1.500L8 4.500L4 7.500z" fill="#222" stroke="none" />
                <path d="M4 14.500h2M7.500 13v3M10 14.500h2" />
              </svg>
              <span className="text-xs leading-[14px] [writing-mode:vertical-rl] [text-orientation:sideways]">图库</span>
            </button>
          </div>
        </div>
        <PropertyPanel />
        <div className="w-1.5 shrink-0 border-r-4 border-[#dadada]" />

        <main className="relative flex min-w-0 flex-1 flex-col">
          <div className="flex h-[22px] shrink-0 items-end whitespace-nowrap leading-[17px]">
            {DOC_TABS.map((tab, i) => (
              <button
                key={tab.name}
                className={clsx(
                  'h-5 pb-0.5 text-left border-[#a8a8a8] bg-[#f0f0f0]',
                  tab.width,
                  i === 0
                    ? 'border-r rounded-tr bg-[linear-gradient(135deg,#e5e5e5_14px,#a8a8a8_14px,#a8a8a8_15px,#f0f0f0_15px)]'
                    : 'border-t border-r rounded-t',
                  i === DOC_TABS.length - 1 && 'border-r-0 bg-[linear-gradient(135deg,#f0f0f0_62px,#ffffff_62px)]',
                )}
              >
                {tab.name}
              </button>
            ))}
            <div className="-ml-4 flex h-5 w-[135px] items-center gap-3 rounded-tr border-r border-[#a8a8a8] bg-[linear-gradient(135deg,transparent_14px,#a8a8a8_14px,#a8a8a8_15px,#ffffff_15px)] pb-px pl-[33px]">
              <button className="font-bold">大带轮.dwg*</button>
              <button aria-label="关闭">
                <svg viewBox="0 0 8 8" className="size-2" stroke="#555" strokeWidth="1.500"><path d="M.500.500l7 7M7.500.500l-7 7" /></svg>
              </button>
            </div>
          </div>
          <div className="min-h-0 flex-1 bg-black">
            <Drawing />
          </div>
          <div className="flex h-[5px] shrink-0 items-start overflow-hidden border-t border-[#777] pl-16 text-left leading-[11px]">
            <button className="w-12 bg-white font-bold">模型</button>
            <button className="w-12 border-r border-[#999] pl-1 text-left">布局1</button>
            <button className="w-12 border-r border-[#999] pl-1 text-left">布局2</button>
          </div>
          <span className="absolute right-4 bottom-[9px] text-[15px] leading-5 text-[#b0b0b0]">CSDN @biyezuopin</span>
        </main>
      </div>
    </div>
  )
}
